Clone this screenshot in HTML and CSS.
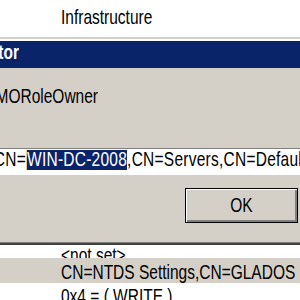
FILE: index.html
```html
<!DOCTYPE html>
<html lang="en">
  <head>
    <meta charset="UTF-8" />
    <meta name="viewport" content="width=device-width, initial-scale=1.0" />
    <title>String Attribute Editor</title>
    <link rel="stylesheet" href="styles.css">
  </head>
  <body>
    <div class="backdrop">
      <span class="txt">Infrastructure</span>
    </div>

    <div class="dialog">
      <div class="title-bar">
        <div class="title-clip">
          <span class="txt">String Attribute Editor</span>
        </div>
      </div>

      <div class="dialog-body">
        <div class="attr-row">
          <span class="txt attr-label">Attribute:</span>
          <span class="txt">fSMORoleOwner</span>
        </div>

        <div class="edit">
          <div class="edit-line">
            <div class="edit-pre">CN=NTDS Settings,CN=</div>
            <span class="caret"></span>
            <span class="sel">WIN-DC-2008</span>
            <span>,CN=Servers,CN=Default-First-Site-Name,CN=Sites,CN=Configuration</span>
          </div>
        </div>

        <div class="button-row">
          <button class="ok-button"><span class="txt">OK</span></button>
        </div>
      </div>
    </div>

    <div class="list">
      <div class="list-row row-clipped">
        <span class="txt">&lt;not set&gt;</span>
      </div>
      <div class="list-row row-alt">
        <span class="txt">CN=NTDS Settings,CN=GLADOS</span>
      </div>
      <div class="list-row row-last">
        <span class="txt">0x4 = ( WRITE )</span>
      </div>
    </div>
  </body>
</html>
```

FILE: styles.css
```css
body {
  margin: 0;
  width: 300px;
  height: 300px;
  overflow: hidden;
  background: #fff;
  color: #000;
  font-family: "Liberation Sans", Arial, sans-serif;
  font-size: 15.5px;
}

/* the old UI font is tall and narrow */
.txt {
  display: inline-block;
  line-height: 16px;
  white-space: nowrap;
  transform: scaleY(1.25);
  transform-origin: 0 0;
}

.backdrop {
  height: 37px;
  box-sizing: border-box;
  padding: 7px 0 0 61px;
}

.dialog {
  background: #d4d0c8;
  border-top: 2px solid #d4d0c8;
  border-bottom: 2px solid #404040;
}

.title-bar {
  height: 25px;
  padding-top: 2px;
  border-top: 2px solid #fff;
  background: #0a246a;
  color: #fff;
  font-weight: bold;
}

.title-clip {
  width: 19px;
  display: flex;
  justify-content: flex-end;
}

.dialog-body {
  height: 175px;
  box-sizing: border-box;
  padding-top: 19px;
  border-bottom: 1px solid #808080;
}

/* the value ends near x=98, the rest runs off the left edge */
.attr-row {
  width: 98px;
  height: 16px;
  display: flex;
  justify-content: flex-end;
}
.attr-label {
  flex: none;
  margin-right: 40px;
}
.attr-row .txt {
  flex: none;
}

.edit {
  margin-top: 45px;
  height: 24px;
  padding-top: 1px;
  background: #fff;
  border-top: 1px solid #808080;
  border-bottom: 1px solid #fff;
  overflow: hidden;
}

.edit-line {
  display: flex;
  line-height: 16px;
  letter-spacing: 0.25px;
  white-space: nowrap;
  transform: scaleY(1.25);
  transform-origin: 0 0;
}

.edit-pre {
  flex: none;
  width: 26px;
  display: flex;
  justify-content: flex-end;
}

.caret {
  flex: none;
  width: 1px;
  background: #e8c88c;
}

.sel {
  flex: none;
  background: #0a246a;
  color: #fff;
}

.button-row {
  display: flex;
  justify-content: flex-end;
  margin-top: 13px;
  padding-right: 2px;
}

.ok-button {
  width: 113px;
  height: 35px;
  padding: 0;
  display: flex;
  align-items: center;
  justify-content: center;
  font: inherit;
  color: #000;
  background: #d4d0c8;
  border: 1px solid #000;
  box-shadow: inset 1px 1px #fff, inset -2px -2px #808080;
}
.ok-button .txt {
  transform-origin: 50% 50%;
}

.list-row {
  overflow: hidden;
  box-sizing: border-box;
  padding-left: 61px;
}

.row-clipped {
  height: 13px;
}
.row-clipped .txt {
  margin-top: -11px;
}

.row-alt {
  height: 25px;
  padding-top: 4px;
  background: #d4d0c8;
}

.row-last {
  height: 17px;
  padding-top: 3px;
}
```
